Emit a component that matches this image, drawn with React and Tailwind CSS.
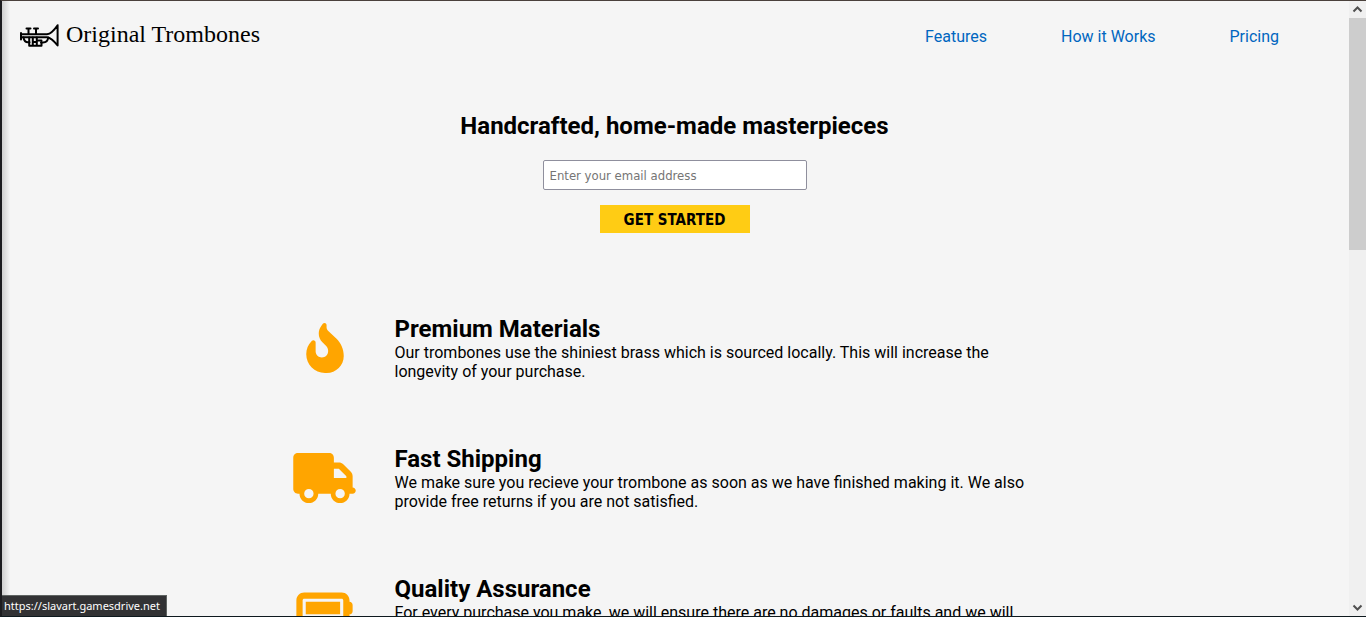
import { FaFireFlameCurved, FaTruck, FaBatteryFull } from "react-icons/fa6";

const links = [
  { label: "Features", href: "#features" },
  { label: "How it Works", href: "#how-it-works" },
  { label: "Pricing", href: "#pricing" },
];

const features = [
  {
    icon: FaFireFlameCurved,
    size: "w-[38px]",
    title: "Premium Materials",
    text: "Our trombones use the shiniest brass which is sourced locally. This will increase the longevity of your purchase.",
  },
  {
    icon: FaTruck,
    size: "w-[63px]",
    title: "Fast Shipping",
    text: "We make sure you recieve your trombone as soon as we have finished making it. We also provide free returns if you are not satisfied.",
  },
  {
    icon: FaBatteryFull,
    size: "w-[57px]",
    title: "Quality Assurance",
    text: "For every purchase you make, we will ensure there are no damages or faults and we will check and test the pitch of your instrument.",
  },
];

function BrassIcon() {
  return (
    <svg
      viewBox="0 0 40 24"
      className="h-6 w-10"
      fill="none"
      stroke="#000"
      strokeWidth="2"
      strokeLinecap="round"
      strokeLinejoin="round"
      aria-hidden="true"
    >
      <path d="M1 9v6.500M1 10.300h26C31.500 9.800 35 5 37.600 1.200v20.300C34.500 17.500 31.500 13.800 27 13.200H1" />
      <path d="M6.500 4.500h4M14 4.500h4M8.500 4.500v5.500M16 4.500v5.500" />
      <path d="M3.500 13.500c.500 3 2 4.800 4.500 4.800h1.500M21 18.500h2c3 0 4.900-1.800 5.200-5" />
      <path d="M9.200 13.500v8.200h3.600v-8.200M12.800 18h4M16.800 13.500v8.200h4.700v-3.500M12.800 21.700h4M18.500 16.500h3" />
    </svg>
  );
}

function Logo() {
  return (
    <a href="#top" className="flex items-center gap-1.5 text-black">
      <BrassIcon />
      <span className="pb-1 font-['Liberation_Serif',serif] text-2xl leading-8">Original Trombones</span>
    </a>
  );
}

function Scrollbar() {
  return (
    <div className="flex w-[17px] shrink-0 flex-col bg-[#f0f0f0]" aria-hidden="true">
      <svg viewBox="0 0 17 17" className="h-[17px] w-[17px]" fill="none" stroke="#505050" strokeWidth="2">
        <path d="M4.500 10.500 8.500 6.500l4 4" />
      </svg>
      <div className="h-[232px] bg-[#cdcdcd]" />
      <svg viewBox="0 0 17 17" className="mt-auto h-[17px] w-[17px]" fill="none" stroke="#505050" strokeWidth="2">
        <path d="M4.500 6.500 8.500 10.500l4-4" />
      </svg>
    </div>
  );
}

export default function App() {
  return (
    <div className="relative flex h-screen overflow-hidden border-t border-b border-l-2 border-t-[#4a413c] border-b-[#0e191e] border-l-[#1c1c1f] bg-[#f5f5f5] font-[Roboto,sans-serif] text-base text-black">
      <div className="w-2 shrink-0 bg-linear-to-r from-[#cfcfcf] to-[#f5f5f5]" />
      <div id="top" className="-ml-2 min-w-0 flex-1 overflow-hidden">
        <header className="flex h-[70px] items-center justify-between pr-[70px] pl-[18px]">
          <Logo />
          <nav className="flex gap-[74px] pt-0.5">
            {links.map((l) => (
              <a key={l.label} href={l.href} className="text-[#0066c0]">
                {l.label}
              </a>
            ))}
          </nav>
        </header>
        <main className="pr-0.5">
          <section className="flex flex-col items-center pt-[41px]">
            <h1 className="text-2xl leading-7 font-bold">Handcrafted, home-made masterpieces</h1>
            <form className="flex flex-col items-center gap-[15px] pt-5" onSubmit={(e) => e.preventDefault()}>
              <input
                type="email"
                aria-label="Email address"
                placeholder="Enter your email address"
                className="h-[30px] w-[264px] rounded-xs border border-[#8f8f9d] bg-white px-1.5 font-['DejaVu_Sans_Condensed','DejaVu_Sans',sans-serif] text-[13px] placeholder:text-[#757575]"
              />
              <button
                type="submit"
                className="h-7 w-[150px] bg-[#ffcc14] pt-0.5 font-['DejaVu_Sans_Condensed','DejaVu_Sans',sans-serif] text-[15px] font-bold"
              >
                GET STARTED
              </button>
            </form>
          </section>
          <section id="features" className="mx-auto mt-[82px] flex w-[840px] max-w-full flex-col gap-[64px]">
            {features.map(({ icon: Icon, size, title, text }) => (
              <article key={title} className="flex pr-[50px]">
                <div className="flex w-[140px] shrink-0 justify-center pt-2">
                  <Icon className={`h-[50px] text-[#ffa500] ${size}`} />
                </div>
                <div>
                  <h2 className="text-2xl leading-7 font-bold">{title}</h2>
                  <p className="leading-[19px]">{text}</p>
                </div>
              </article>
            ))}
          </section>
        </main>
      </div>
      <Scrollbar />
      <div className="absolute bottom-0 left-0 border-t border-r border-[#5f6462] bg-[#323234] pr-1.5 pl-0.5 font-['Noto_Sans',sans-serif] text-[11px] leading-5 text-white">
        https://slavart.gamesdrive.net
      </div>
    </div>
  );
}
